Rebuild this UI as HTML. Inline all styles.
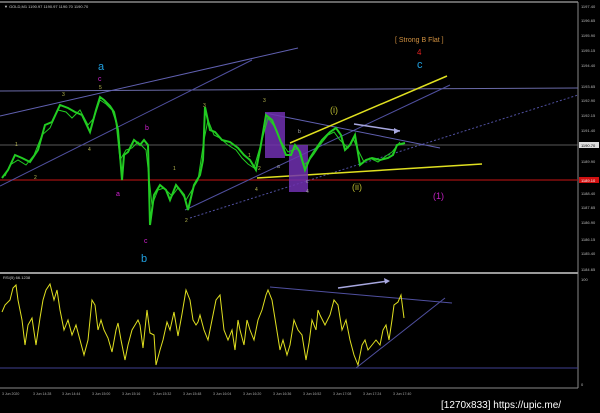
<!DOCTYPE html>
<html><head><meta charset="utf-8"><style>
html,body{margin:0;padding:0;background:#000;width:600px;height:413px;overflow:hidden}
svg{display:block}
text{font-family:"Liberation Sans",sans-serif}
</style></head><body>
<svg width="600" height="413" viewBox="0 0 600 413" xmlns="http://www.w3.org/2000/svg">
<rect width="600" height="413" fill="#000"/>
<!-- frame -->
<line x1="0" y1="2" x2="578" y2="2" fill="none" stroke="#888" stroke-width="1.5"/>
<line x1="578" y1="2" x2="578" y2="388" stroke="#888" stroke-width="1"/>
<line x1="0" y1="273" x2="578" y2="273" stroke="#999" stroke-width="2"/>
<line x1="0" y1="388" x2="578" y2="388" stroke="#888" stroke-width="1"/>
<text x="4" y="8" fill="#ccc" font-size="4">▼ GOLD,M1  1190.97 1190.97 1190.70 1190.70</text>
<!-- horizontal lines -->
<line x1="0" y1="91" x2="578" y2="88" stroke="#6a6aa8" stroke-width="1"/>
<line x1="0" y1="145" x2="578" y2="145" stroke="#777" stroke-width="0.8"/>
<line x1="0" y1="180" x2="578" y2="180" stroke="#a01010" stroke-width="1.2"/>
<!-- trend lines -->
<line x1="0" y1="116" x2="298" y2="48" stroke="#6060b0" stroke-width="1"/>
<line x1="0" y1="186" x2="252" y2="60" stroke="#5050a0" stroke-width="1"/>
<line x1="185" y1="210" x2="450" y2="85" stroke="#5050a0" stroke-width="1"/>
<line x1="190" y1="218" x2="578" y2="95" stroke="#5050a0" stroke-width="1" stroke-dasharray="2,2"/>
<line x1="265" y1="113" x2="440" y2="148" stroke="#6060b0" stroke-width="1"/>
<line x1="290" y1="143" x2="447" y2="76" stroke="#e0e020" stroke-width="1.5"/>
<line x1="257" y1="178" x2="482" y2="164" stroke="#e0e020" stroke-width="1.5"/>
<line x1="354" y1="124" x2="400" y2="131" stroke="#a8a8e0" stroke-width="1.5"/>
<polygon points="400,131 394,128 394,134" fill="#a8a8e0"/>
<!-- boxes -->
<rect x="265" y="112" width="20" height="46" fill="#7030b0" opacity="0.85"/>
<rect x="289" y="145" width="19" height="47" fill="#7030b0" opacity="0.85"/>
<!-- price -->
<polyline fill="none" stroke="#22cc22" stroke-width="2" points="2,178 8,170 15,155 22,158 30,162 38,150 45,125 52,122 60,105 68,108 75,112 82,115 90,132 96,110 100,97 104,100 110,106 114,112 118,130 122,180 124,155 128,152 134,140 140,145 144,140 148,145 150,225 154,195 160,185 166,190 170,200 176,185 180,190 184,195 188,210 194,185 200,175 203,160 205,107 210,130 215,132 222,140 230,142 238,148 244,155 250,160 256,170 260,150 266,115 272,120 277,132 282,145 286,155 291,155 295,145 300,152 305,170 310,158 315,150 322,140 330,132 336,128 341,135 345,150 350,145 355,135 360,165 366,160 372,158 380,160 388,158 393,155 397,145 405,143"/>
<polyline fill="none" stroke="#22cc22" stroke-width="1" points="5,176 10,165 18,160 26,165 34,155 42,135 50,128 58,110 66,112 72,118 80,110 88,125 94,118 100,100 106,104 112,110 116,122 120,160 126,150 132,148 138,142 146,150 152,205 158,190 164,188 172,196 178,188 186,200 192,190 198,180 204,140 208,120 214,135 220,138 228,145 236,150 242,158 248,164 254,168 262,140 268,118 274,126 280,140 288,152 293,150 298,148 303,165 308,162 314,154 320,145 328,135 334,132 340,140 348,148 353,138 358,150 364,162 370,158 378,162 386,156 392,152 400,142"/>
<!-- wave labels -->
<g font-size="5" fill="#b8b850">
<text x="15" y="146">1</text><text x="34" y="179">2</text><text x="62" y="96">3</text><text x="88" y="151">4</text><text x="99" y="89">5</text>
<text x="173" y="170">1</text><text x="185" y="222">2</text><text x="203" y="107">3</text><text x="248" y="157">1</text><text x="258" y="170">2</text><text x="255" y="191">4</text><text x="263" y="102">3</text>
</g>
<g font-size="5" fill="#aaa"><text x="298" y="133">b</text><text x="277" y="168">a</text><text x="306" y="183">c</text><text x="306" y="193">4</text></g>
<text x="98" y="70" font-size="11" fill="#20a0e0">a</text>
<text x="98" y="81" font-size="7" fill="#d020d0">c</text>
<text x="145" y="130" font-size="7" fill="#d020d0">b</text>
<text x="116" y="196" font-size="7" fill="#d020d0">a</text>
<text x="144" y="243" font-size="7" fill="#d020d0">c</text>
<text x="141" y="262" font-size="11" fill="#20a0e0">b</text>
<text x="330" y="113" font-size="9" fill="#b8b830">(i)</text>
<text x="352" y="190" font-size="9" fill="#b8b830">(ii)</text>
<text x="433" y="199" font-size="9" fill="#c020c0">(1)</text>
<text x="395" y="42" font-size="7" fill="#d09040">[ Strong B Flat ]</text>
<text x="417" y="55" font-size="8" fill="#e02020">4</text>
<text x="417" y="68" font-size="11" fill="#20a0e0">c</text>
<!-- right axis -->
<g font-size="4" fill="#bbb">
<text x="581" y="8">1197.40</text><text x="581" y="22">1196.65</text><text x="581" y="37">1195.90</text><text x="581" y="52">1195.15</text><text x="581" y="67">1194.40</text><text x="581" y="88">1193.65</text><text x="581" y="102">1192.90</text><text x="581" y="117">1192.15</text><text x="581" y="132">1191.40</text><text x="581" y="163">1189.90</text><text x="581" y="195">1188.40</text><text x="581" y="209">1187.65</text><text x="581" y="224">1186.90</text><text x="581" y="241">1186.15</text><text x="581" y="255">1185.40</text><text x="581" y="271">1184.65</text><text x="581" y="281">100</text><text x="581" y="386">0</text>
</g>
<rect x="579" y="142" width="20" height="6" fill="#ddd"/><text x="581" y="147" font-size="4" fill="#000">1190.70</text>
<rect x="579" y="177" width="20" height="6" fill="#d01010"/><text x="581" y="182" font-size="4" fill="#fff">1189.10</text>
<!-- RSI -->
<text x="3" y="279" font-size="4" fill="#ccc">RSI(5) 66.1238</text>
<line x1="0" y1="368" x2="578" y2="368" stroke="#404090" stroke-width="1"/>
<line x1="270" y1="287" x2="452" y2="303" stroke="#5050a0" stroke-width="1"/>
<line x1="356" y1="368" x2="445" y2="298" stroke="#5050a0" stroke-width="1"/>
<line x1="338" y1="288" x2="388" y2="281" stroke="#a8a8e0" stroke-width="1.5"/>
<polygon points="390,281 384,278 385,284" fill="#a8a8e0"/>
<polyline fill="none" stroke="#e0e020" stroke-width="1" points="2,312 5,305 10,300 13,288 16,285 18,300 22,320 25,345 28,325 32,318 36,345 40,318 43,300 46,290 50,284 54,300 57,290 60,310 64,330 68,320 72,335 76,325 80,340 84,355 88,340 92,300 95,305 98,330 101,320 104,330 108,338 112,352 116,330 118,323 121,340 125,360 128,345 132,330 135,325 138,320 140,325 143,348 147,310 150,333 154,335 156,365 160,350 163,340 167,322 170,330 174,312 178,336 182,314 186,290 190,300 193,320 196,325 198,322 200,315 204,330 208,340 212,320 216,300 220,295 224,330 228,340 232,330 235,350 238,320 240,330 244,345 247,320 250,330 254,340 258,320 262,310 266,295 268,290 272,300 276,325 280,350 283,340 287,355 290,345 294,320 298,330 302,335 306,360 309,343 312,320 316,330 318,310 320,315 325,325 330,315 334,300 338,305 342,330 346,320 350,340 354,355 358,365 362,345 365,340 368,350 372,345 376,340 380,345 383,330 386,325 389,340 392,320 394,305 398,302 401,295 404,318"/>
<!-- time axis -->
<g font-size="3.5" fill="#aaa">
<text x="2" y="395">3 Jun 2020</text><text x="33" y="395">3 Jun 14:28</text><text x="62" y="395">3 Jun 14:44</text><text x="92" y="395">3 Jun 15:00</text><text x="122" y="395">3 Jun 15:16</text><text x="153" y="395">3 Jun 15:32</text><text x="183" y="395">3 Jun 15:48</text><text x="213" y="395">3 Jun 16:04</text><text x="243" y="395">3 Jun 16:20</text><text x="273" y="395">3 Jun 16:36</text><text x="303" y="395">3 Jun 16:52</text><text x="333" y="395">3 Jun 17:08</text><text x="363" y="395">3 Jun 17:24</text><text x="393" y="395">3 Jun 17:40</text>
</g>
<text x="441" y="408" font-size="10" fill="#fff">[1270x833] https://upic.me/</text>
</svg>
</body></html>
